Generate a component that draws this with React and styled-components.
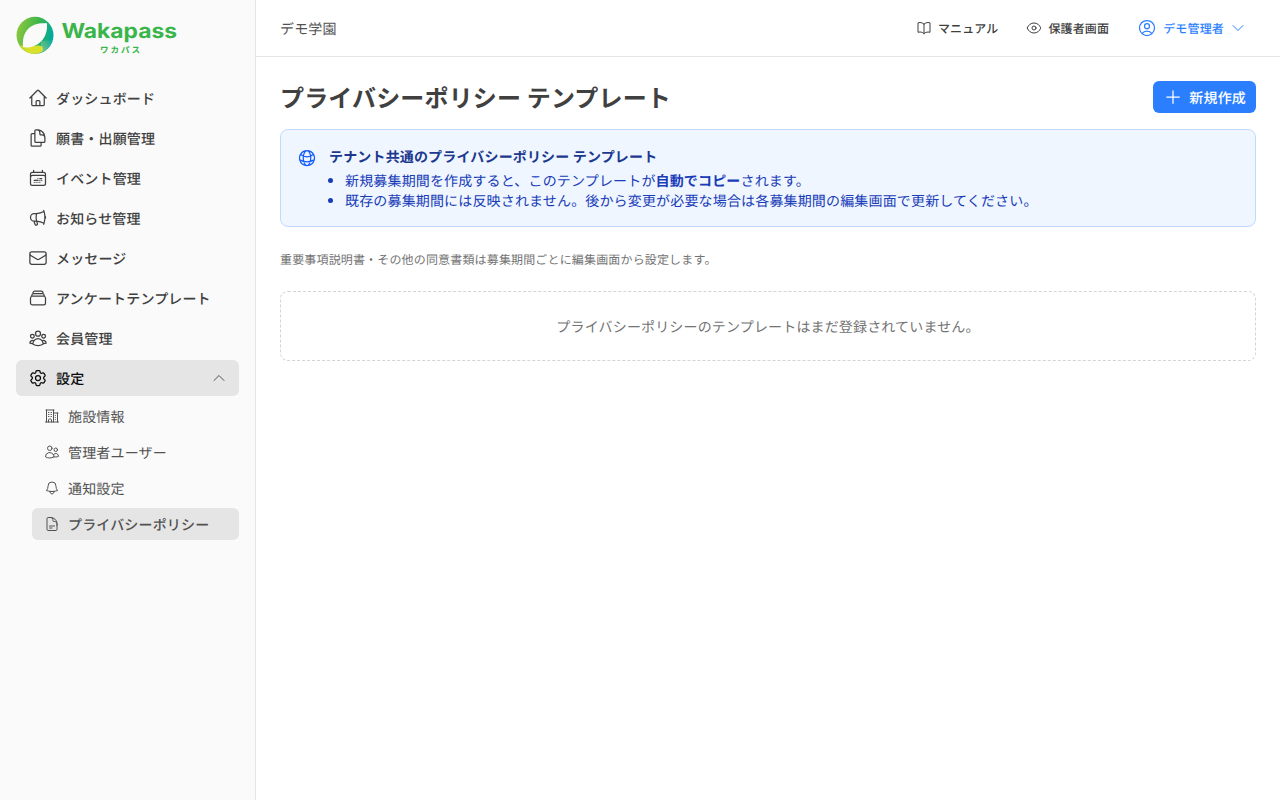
import React from 'react';
import styled, { createGlobalStyle } from 'styled-components';
import {
  HiOutlineHome, HiOutlineDocumentDuplicate, HiOutlineCalendarDateRange, HiOutlineMegaphone,
  HiOutlineEnvelope, HiOutlineRectangleStack, HiOutlineUserGroup, HiOutlineCog6Tooth,
  HiOutlineBuildingOffice2, HiOutlineUsers, HiOutlineBell, HiOutlineDocumentText,
  HiOutlineBookOpen, HiOutlineEye, HiOutlineUserCircle, HiOutlineChevronDown,
  HiOutlineChevronUp, HiOutlinePlus, HiOutlineGlobeAlt,
} from 'react-icons/hi2';

const GlobalStyle = createGlobalStyle`
* { box-sizing: border-box; }
body {
  margin: 0;
  background: #fff;
  color: #404040;
  font-family: "Noto Sans CJK JP", sans-serif;
  font-size: 14px;
  line-height: 20px;
  letter-spacing: 0.16px;
  text-rendering: geometricPrecision;
  -webkit-font-smoothing: antialiased;
}
svg { flex-shrink: 0; }
`;

const Layout = styled.div`
display: flex;
height: 100vh;
`;

const Sidebar = styled.aside`
width: 256px;
flex-shrink: 0;
padding: 16px;
background: #fafafa;
border-right: 1px solid #e5e5e5;
`;

const LogoSvg = styled.svg`
display: block;
margin-bottom: 24px;
letter-spacing: 0;
`;

const Nav = styled.nav`
display: flex;
flex-direction: column;
gap: 4px;
`;

const NavItem = styled.a`
display: flex;
align-items: center;
gap: 8px;
height: 36px;
padding: 0 12px;
border-radius: 6px;
font-weight: 500;
color: ${props => (props.$active ? '#0a0a0a' : '#404040')};
background: ${props => (props.$active ? '#e5e5e5' : 'transparent')};
svg:first-child { font-size: 20px; }
`;

// padding-top : keeps the kana optically centered next to icons
const Label = styled.span`
flex: ${props => (props.$grow ? 1 : 'none')};
padding-top: 2px;
white-space: nowrap;
`;

const SubNav = styled.div`
display: flex;
flex-direction: column;
gap: 4px;
padding-left: 16px;
`;

const SubItem = styled.a`
display: flex;
align-items: center;
gap: 8px;
height: 32px;
padding: 0 12px;
border-radius: 6px;
color: #525252;
font-weight: ${props => (props.$active ? 500 : 400)};
background: ${props => (props.$active ? '#e5e5e5' : 'transparent')};
svg { font-size: 16px; }
`;

const Main = styled.div`
flex: 1;
min-width: 0;
`;

const Header = styled.header`
display: flex;
align-items: center;
justify-content: space-between;
height: 57px;
padding: 0 24px;
border-bottom: 1px solid #e5e5e5;
color: #525252;
`;

const HeaderActions = styled.div`
display: flex;
gap: 8px;
`;

const HeaderButton = styled.button`
display: flex;
align-items: center;
gap: 6px;
height: 32px;
padding: 0 10px;
border: 0;
background: none;
font: inherit;
letter-spacing: inherit;
text-rendering: inherit;
font-size: 12px;
font-weight: 500;
color: ${props => (props.$primary ? '#2b7fff' : '#404040')};
svg { font-size: 16px; }
svg:first-child { font-size: ${props => (props.$primary ? '20px' : '16px')}; }
`;

const Content = styled.main`
padding: 24px;
`;

const TitleRow = styled.div`
display: flex;
align-items: center;
justify-content: space-between;
height: 32px;
margin-bottom: 16px;
`;

const Title = styled.h1`
margin: 0;
font-size: 24px;
line-height: 32px;
font-weight: 700;
`;

const CreateButton = styled.button`
display: flex;
align-items: center;
gap: 6px;
height: 32px;
padding: 0 10px;
border: 0;
border-radius: 6px;
background: #2b7fff;
color: #fff;
font: inherit;
letter-spacing: inherit;
text-rendering: inherit;
font-weight: 500;
svg { font-size: 20px; }
`;

const Notice = styled.section`
display: flex;
gap: 12px;
height: 98px;
padding: 16px;
border: 1px solid #bedbff;
border-radius: 8px;
background: #eff6ff;
color: #193cb8;
> svg { font-size: 20px; margin-top: 2px; color: #155dfc; }
`;

const NoticeBody = styled.div`
padding-top: 1px;
`;

const NoticeTitle = styled.p`
margin: 0 0 4px;
font-weight: 600;
color: #1c398e;
`;

const NoticeList = styled.ul`
margin: 0;
padding-left: 16px;
`;

const Note = styled.p`
margin: 25px 0 23px;
font-size: 12px;
line-height: 16px;
color: #737373;
`;

const Empty = styled.div`
padding: 25px 24px 23px;
border: 1px dashed #d4d4d4;
border-radius: 8px;
text-align: center;
color: #737373;
`;

const menu = [
  { label: 'ダッシュボード', icon: HiOutlineHome },
  { label: '願書・出願管理', icon: HiOutlineDocumentDuplicate },
  { label: 'イベント管理', icon: HiOutlineCalendarDateRange },
  { label: 'お知らせ管理', icon: HiOutlineMegaphone },
  { label: 'メッセージ', icon: HiOutlineEnvelope },
  { label: 'アンケートテンプレート', icon: HiOutlineRectangleStack },
  { label: '会員管理', icon: HiOutlineUserGroup },
];

const settingsMenu = [
  { label: '施設情報', icon: HiOutlineBuildingOffice2 },
  { label: '管理者ユーザー', icon: HiOutlineUsers },
  { label: '通知設定', icon: HiOutlineBell },
  { label: 'プライバシーポリシー', icon: HiOutlineDocumentText, active: true },
];

const Logo = () => (
  <LogoSvg width="164" height="40" viewBox="0 0 164 40" role="img" aria-label="Wakapass">
    <defs>
      <linearGradient id="ring" x1="0" y1="0.4" x2="1" y2="0.6">
        <stop offset="0" stopColor="#8cc63f" />
        <stop offset="0.55" stopColor="#39b54a" />
        <stop offset="0.95" stopColor="#00a99d" />
      </linearGradient>
      <linearGradient id="base" x1="0" y1="0" x2="1" y2="0">
        <stop offset="0" stopColor="#b5d334" />
        <stop offset="0.4" stopColor="#d9e02b" />
        <stop offset="1" stopColor="#d9e02b" />
      </linearGradient>
      <linearGradient id="shade" x1="1" y1="0" x2="0" y2="1">
        <stop offset="0" stopColor="#8cc6a0" stopOpacity="0" />
        <stop offset="1" stopColor="#8cc6a0" stopOpacity="0.9" />
      </linearGradient>
    </defs>
    <circle cx="19" cy="19.3" r="18.5" fill="url(#ring)" />
    <path d="M25 25 L37 24 C35 30 31 34.5 25 36.8Z" fill="url(#shade)" />
    <path d="M3 29 C9 30.5 15 30.5 20 29.8 C24 29 27 30 27 33 C27 35.5 24 37.5 19.5 37.8 C12 38 6.5 34.5 3 29Z" fill="url(#base)" />
    <path d="M31 7.3 C31.4 15 29.5 21 25 25.5 C20 30.5 14 32 7 31.3 C6.2 23 8 17 12.5 12.5 C17 8 23 6.7 31 7.3Z" fill="#fafafa" />
    <text x="45.5" y="22" textLength="115.5" lengthAdjust="spacingAndGlyphs" fontFamily="Inter, sans-serif" fontWeight="700" fontSize="20.5" fill="#39b54a">Wakapass</text>
    <text x="84" y="37.3" textLength="40" fontFamily="Noto Sans CJK JP, sans-serif" fontWeight="700" fontSize="8.5" fill="#39b54a">ワカパス</text>
  </LogoSvg>
);

const App = () => {
  return (
    <>
      <GlobalStyle />
      <Layout>
        <Sidebar>
          <Logo />
          <Nav>
            {menu.map(({ label, icon: Icon }) => (
              <NavItem key={label}>
                <Icon />
                <Label $grow>{label}</Label>
              </NavItem>
            ))}
            <NavItem $active>
              <HiOutlineCog6Tooth />
              <Label $grow>設定</Label>
              <HiOutlineChevronUp size={16} color="#525252" />
            </NavItem>
            <SubNav>
              {settingsMenu.map(({ label, icon: Icon, active }) => (
                <SubItem key={label} $active={active}>
                  <Icon />
                  <Label>{label}</Label>
                </SubItem>
              ))}
            </SubNav>
          </Nav>
        </Sidebar>
        <Main>
          <Header>
            <Label>デモ学園</Label>
            <HeaderActions>
              <HeaderButton><HiOutlineBookOpen /><Label>マニュアル</Label></HeaderButton>
              <HeaderButton><HiOutlineEye /><Label>保護者画面</Label></HeaderButton>
              <HeaderButton $primary>
                <HiOutlineUserCircle />
                <Label>デモ管理者</Label>
                <HiOutlineChevronDown />
              </HeaderButton>
            </HeaderActions>
          </Header>
          <Content>
            <TitleRow>
              <Title>プライバシーポリシー テンプレート</Title>
              <CreateButton><HiOutlinePlus /><Label>新規作成</Label></CreateButton>
            </TitleRow>
            <Notice>
              <HiOutlineGlobeAlt />
              <NoticeBody>
                <NoticeTitle>テナント共通のプライバシーポリシー テンプレート</NoticeTitle>
                <NoticeList>
                  <li>新規募集期間を作成すると、このテンプレートが<strong>自動でコピー</strong>されます。</li>
                  <li>既存の募集期間には反映されません。後から変更が必要な場合は各募集期間の編集画面で更新してください。</li>
                </NoticeList>
              </NoticeBody>
            </Notice>
            <Note>重要事項説明書・その他の同意書類は募集期間ごとに編集画面から設定します。</Note>
            <Empty>プライバシーポリシーのテンプレートはまだ登録されていません。</Empty>
          </Content>
        </Main>
      </Layout>
    </>
  );
};

export default App;
